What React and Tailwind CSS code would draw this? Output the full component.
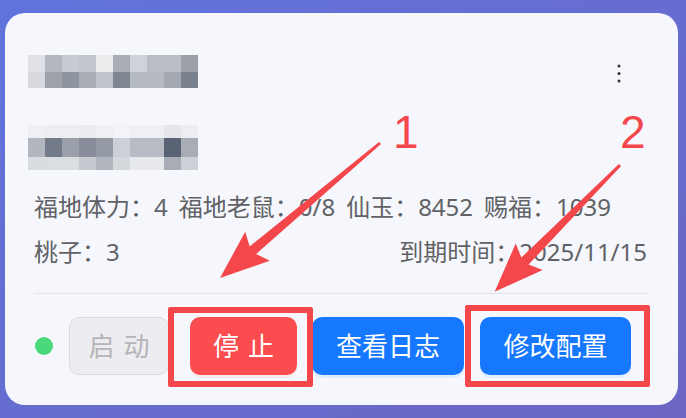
import React from 'react';

const mosaicTop = [
  { h: 17, cells: ['#dfe1e6', '#b3b8c0', '#c7cad1', '#c3c6cd', '#ececef', '#a8adb6', '#cfd2d8', '#b9bdc5', '#b9bdc5', '#9ba0a9'] },
  { h: 16, cells: ['#d7d9de', '#9da2ab', '#8f959f', '#a9aeb6', '#c0c3ca', '#7f8792', '#b6bac2', '#b6bac2', '#a5a9b2', '#79818d'] },
];

const mosaicBottom = [
  { h: 13, cells: ['#eef0f3', '#eceef2', '#eceef1', '#eaecf0', '#eff0f3', '#f3f4f7', '#eff0f3', '#eff0f3', '#e4e6ea', '#eceef1'] },
  { h: 19, cells: ['#b2b6be', '#737b88', '#9aa0a9', '#878e99', '#959ba5', '#cdd0d6', '#b7bbc3', '#b7bbc3', '#596373', '#a7acb5'] },
  { h: 13, cells: ['#d9dce1', '#dadde2', '#dadde2', '#c6c9d0', '#b1b5bd', '#d5d8dd', '#e6e8ec', '#e6e8ec', '#a7acb5', '#cdd0d6'] },
];

const stats = [
  ['福地体力', '4'],
  ['福地老鼠', '0/8'],
  ['仙玉', '8452'],
  ['赐福', '1039'],
];

// pixelated (redacted) name block
const Mosaic = ({ rows }) => (
  <div className="-ml-[6px] flex flex-col">
    {rows.map((row, i) => (
      <div key={i} className="flex">
        {row.cells.map((c, j) => (
          <div key={j} className="w-[17px]" style={{ height: row.h, backgroundColor: c }}></div>
        ))}
      </div>
    ))}
  </div>
);

const App = () => {
  return (
    <div
      className="relative w-[686px] h-[418px] overflow-hidden bg-gradient-to-br from-[#6073dc] to-[#6c66c4] pl-[5px] pt-[13px]"
      style={{ fontFamily: '"Noto Sans", "Noto Sans CJK SC", sans-serif' }}
    >
      {/* Card */}
      <div className="w-[673px] h-[392px] rounded-[20px] bg-[#f6f7fc] px-[29px] pt-[42px]">
        {/* Header */}
        <div className="flex justify-between items-start">
          <div className="flex flex-col">
            <Mosaic rows={mosaicTop} />
            <div className="mt-[37px]">
              <Mosaic rows={mosaicBottom} />
            </div>
          </div>
          <button className="mt-[4px] mr-[15px] w-[30px] h-[30px] flex items-center justify-center">
            <svg width="6" height="22" viewBox="0 0 6 22">
              <circle cx="3" cy="3" r="1.5" fill="#333" />
              <circle cx="3" cy="10.5" r="1.5" fill="#333" />
              <circle cx="3" cy="18" r="1.5" fill="#333" />
            </svg>
          </button>
        </div>

        {/* Stats */}
        <div className="mt-[13.5px] text-[24px] text-[#606266]">
          <div className="flex gap-[11px] h-[45px] leading-[45px]">
            {stats.map(([label, value]) => (
              <span key={label}>{label}：{value}</span>
            ))}
          </div>
          <div className="flex justify-between h-[45px] leading-[45px] pr-[2px]">
            <span>桃子：3</span>
            <span>到期时间：2025/11/15</span>
          </div>
        </div>

        <div className="mt-[19.5px] h-px bg-[#e3e4e9]"></div>

        {/* Actions */}
        <div className="mt-[23px] flex items-center text-[26px]">
          <div className="ml-px w-[18px] h-[18px] rounded-full bg-[#4ad97a]"></div>
          <button className="ml-[16px] w-[100px] h-[58px] rounded-[10px] border border-[#dadbe0] bg-[#ededf1] text-[#b4b4b9] flex items-center justify-center">
            <span className="tracking-[0.34em] -mr-[0.34em]">启动</span>
          </button>
          <button className="ml-[21px] w-[107px] h-[58px] rounded-[10px] bg-[#fb4c4f] text-white flex items-center justify-center shadow-[0_3px_0_rgba(255,38,5,0.06)]">
            <span className="tracking-[0.34em] -mr-[0.34em]">停止</span>
          </button>
          <button className="ml-[15px] w-[152px] h-[58px] rounded-[10px] bg-[#1677ff] text-white flex items-center justify-center shadow-[0_3px_0_rgba(5,145,255,0.1)]">
            查看日志
          </button>
          <button className="ml-[16px] w-[151px] h-[58px] rounded-[10px] bg-[#1677ff] text-white flex items-center justify-center shadow-[0_3px_0_rgba(5,145,255,0.1)]">
            修改配置
          </button>
        </div>
      </div>

      {/* Annotation layer */}
      <div className="absolute left-[168px] top-[307px] w-[145px] h-[80px] border-[6px] border-[#f4474c] rounded-[2px]"></div>
      <div className="absolute left-[465px] top-[305px] w-[185px] h-[82px] border-[6px] border-[#f4474c] rounded-[2px]"></div>
      <svg className="absolute inset-0 pointer-events-none" width="686" height="418" viewBox="0 0 686 418">
        <polygon
          fill="#f4474c"
          points="381,144.1 256.1,254 269.8,260.8 220,278 245.2,231.8 249.7,246.4 379,141.9"
        />
        <polygon
          fill="#f4474c"
          points="621.1,166.1 528.6,264.6 542.7,270.1 494.7,291.7 515.7,243.5 521.4,257.6 618.9,163.9"
        />
      </svg>
      <span
        className="absolute left-[393px] top-[109px] text-[46px] leading-none text-[#f4474c]"
        style={{ fontFamily: '"Liberation Sans", sans-serif' }}
      >
        1
      </span>
      <span
        className="absolute left-[620px] top-[109px] text-[46px] leading-none text-[#f4474c]"
        style={{ fontFamily: '"Liberation Sans", sans-serif' }}
      >
        2
      </span>
    </div>
  );
};

export default App;
